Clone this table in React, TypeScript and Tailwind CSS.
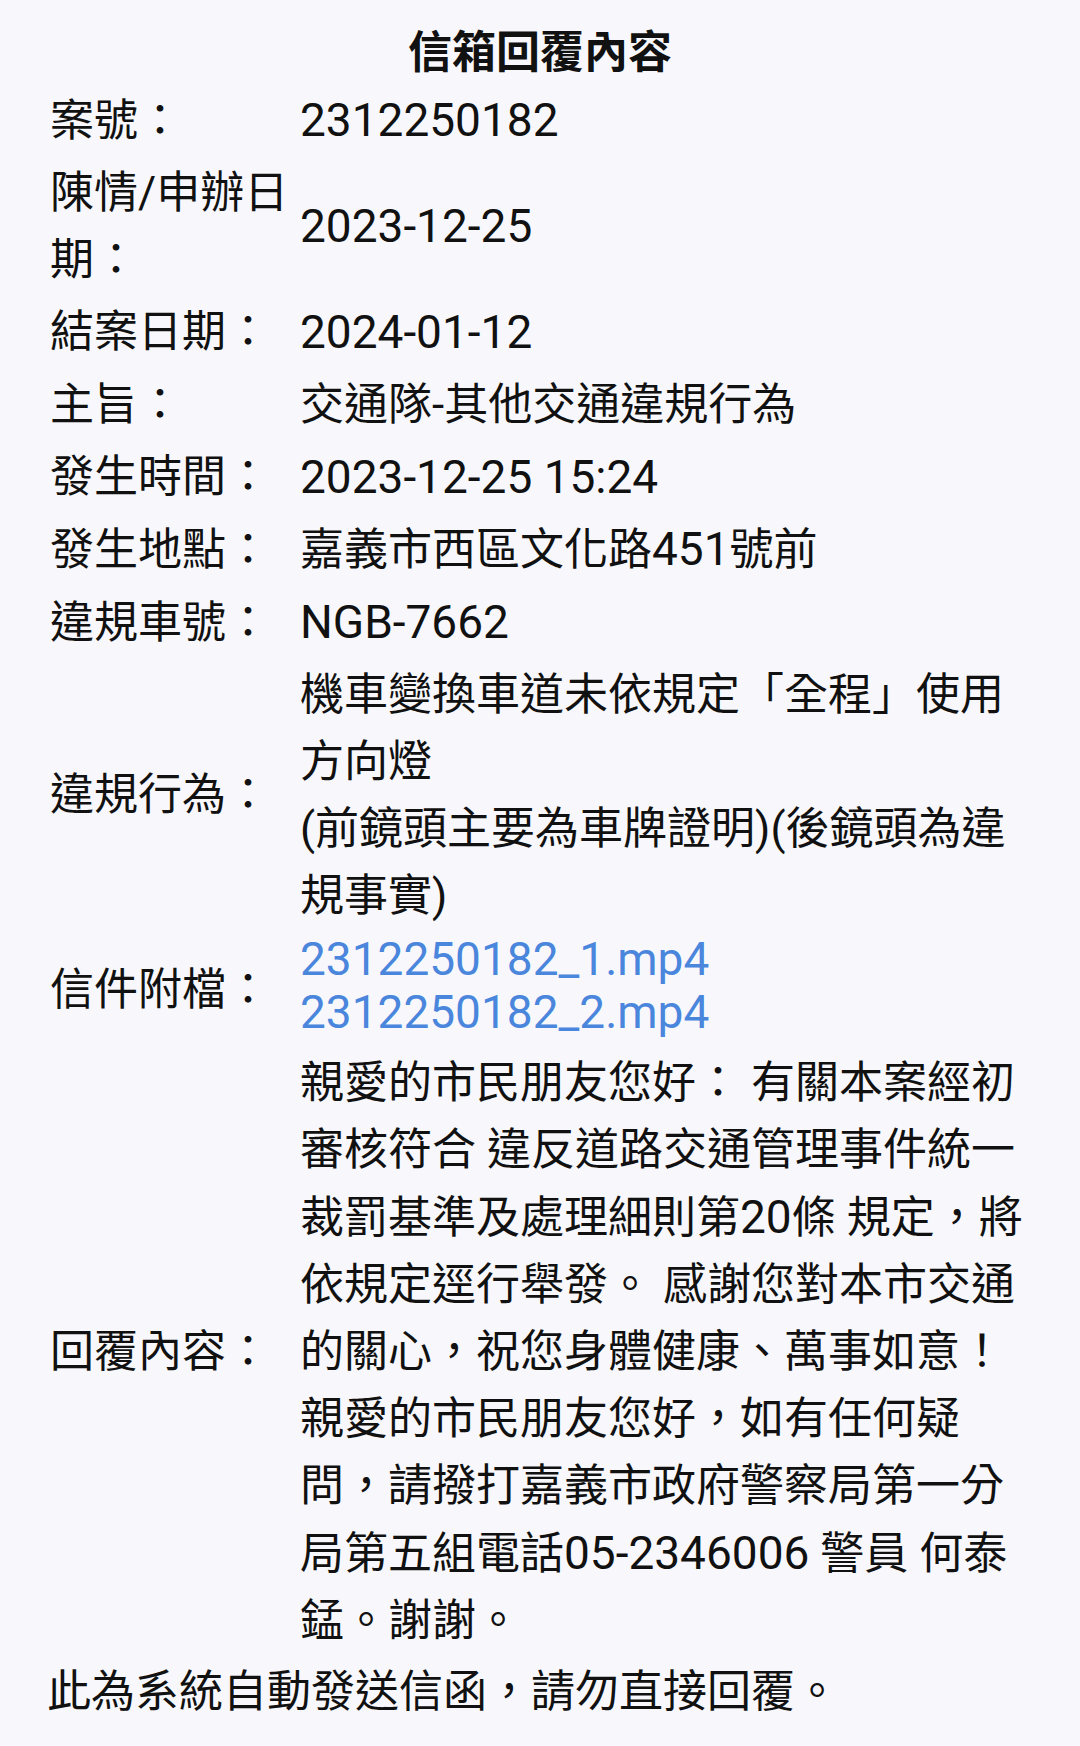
import React from "react";

const L = ({ children }: { children: React.ReactNode }) => (
  <span className="text-[46px]">{children}</span>
);

const Row = ({ label, children }: { label: React.ReactNode; children: React.ReactNode }) => (
  <div className="flex items-center py-[2.4px]">
    <div className="w-[253px] shrink-0 pl-[3px]">{label}</div>
    <div className="w-[733px] shrink-0">{children}</div>
  </div>
);

export default function App() {
  return (
    <div className="min-h-[1746px] bg-[#f8f8fc] px-[47px] text-[44px] leading-[67px] text-[#111] font-[Roboto,'Noto_Sans_CJK_TC',sans-serif]">
      <div className="pt-[21px] text-center font-bold leading-[64px]">信箱回覆內容</div>
      <div>
        <Row label="案號：">
          <L>2312250182</L>
        </Row>
        <Row label="陳情/申辦日期：">
          <L>2023-12-25</L>
        </Row>
        <Row label="結案日期：">
          <L>2024-01-12</L>
        </Row>
        <Row label="主旨：">交通隊-其他交通違規行為</Row>
        <Row label="發生時間：">
          <L>2023-12-25 15:24</L>
        </Row>
        <Row label="發生地點：">
          嘉義市西區文化路<L>451</L>號前
        </Row>
        <Row label="違規車號：">
          <L>NGB-7662</L>
        </Row>
        <Row label="違規行為：">
          機車變換車道未依規定「全程」使用方向燈
          <br />
          (前鏡頭主要為車牌證明)(後鏡頭為違規事實)
        </Row>
        <Row label="信件附檔：">
          <div className="-mt-[2px] mb-[6px] text-[46px] leading-[53.5px] text-[#4a86dc]">
            <div>2312250182_1.mp4</div>
            <div>2312250182_2.mp4</div>
          </div>
        </Row>
        <Row label="回覆內容：">
          親愛的市民朋友您好： 有關本案經初審核符合 違反道路交通管理事件統一裁罰基準及處理細則第<L>20</L>條 規定，將依規定逕行舉發。 感謝您對本市交通的關心，祝您身體健康、萬事如意！親愛的市民朋友您好，如有任何疑問，請撥打嘉義市政府警察局第一分局第五組電話<L>05-2346006</L> 警員 何泰錳。謝謝。
        </Row>
      </div>
      <div className="pt-[1px]">此為系統自動發送信函，請勿直接回覆。</div>
    </div>
  );
}
